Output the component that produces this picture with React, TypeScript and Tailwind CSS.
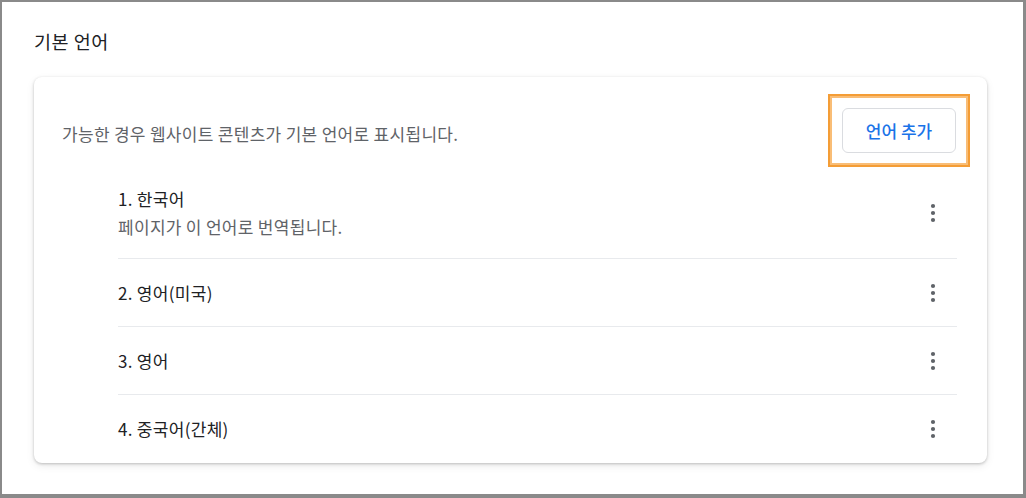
import React from "react";

const font = { fontFamily: '"Noto Sans CJK KR", "Noto Sans", sans-serif' };

function Kebab() {
  return (
    <div className="flex w-12 h-8 items-center justify-center">
      <svg width="6" height="20" viewBox="0 0 6 20" fill="#5f6368">
        <circle cx="3" cy="3" r="2.1" />
        <circle cx="3" cy="10" r="2.1" />
        <circle cx="3" cy="17" r="2.1" />
      </svg>
    </div>
  );
}

const items = ["2. 영어(미국)", "3. 영어", "4. 중국어(간체)"];

export default function App() {
  return (
    <div
      className="w-[1026px] h-[498px] bg-white border-[#8a8a8a] border-l-2 border-t-2 border-r-[3px] border-b-[4px] box-border overflow-hidden"
      style={font}
    >
      <div className="pl-8 pt-[27px] pr-[36px]">
        <div className="text-[18.5px] tracking-[0.5px] leading-6 text-[#202124]">기본 언어</div>
        <div className="mt-6 bg-white rounded-lg shadow-[0_1px_3px_rgba(0,0,0,0.22),0_3px_8px_rgba(0,0,0,0.08)] pt-[17px]">
          <div className="flex items-center justify-between pl-7 pr-[17px]">
            <div className="text-[17px] tracking-[0.3px] leading-7 text-[#5f6368] pt-[7px]">
              가능한 경우 웹사이트 콘텐츠가 기본 언어로 표시됩니다.
            </div>
            <div className="border-2 border-[#f49d36]">
              <div className="border-2 border-[#f9bd76] p-[10px]">
                <button className="w-[114px] h-[45px] rounded-md border border-[#dadce0] bg-white text-[17px] font-medium text-[#1a73e8]">
                  언어 추가
                </button>
              </div>
            </div>
          </div>
          <div className="ml-[84px] mr-[30px]">
            <div className="flex items-center justify-between pt-[18px] pb-[17px] border-b border-[#e8eaed]">
              <div className="text-[17px] tracking-[0.3px] leading-7">
                <div className="text-[#202124]">1. 한국어</div>
                <div className="text-[#5f6368]">페이지가 이 언어로 번역됩니다.</div>
              </div>
              <Kebab />
            </div>
            {items.map((t, i) => (
              <div
                key={t}
                className={
                  i < items.length - 1
                    ? "flex items-center justify-between h-[68px] border-b border-[#e8eaed]"
                    : "flex items-center justify-between h-[68px]"
                }
              >
                <div className="text-[17px] tracking-[0.3px] leading-7 text-[#202124]">{t}</div>
                <Kebab />
              </div>
            ))}
          </div>
        </div>
      </div>
    </div>
  );
}
